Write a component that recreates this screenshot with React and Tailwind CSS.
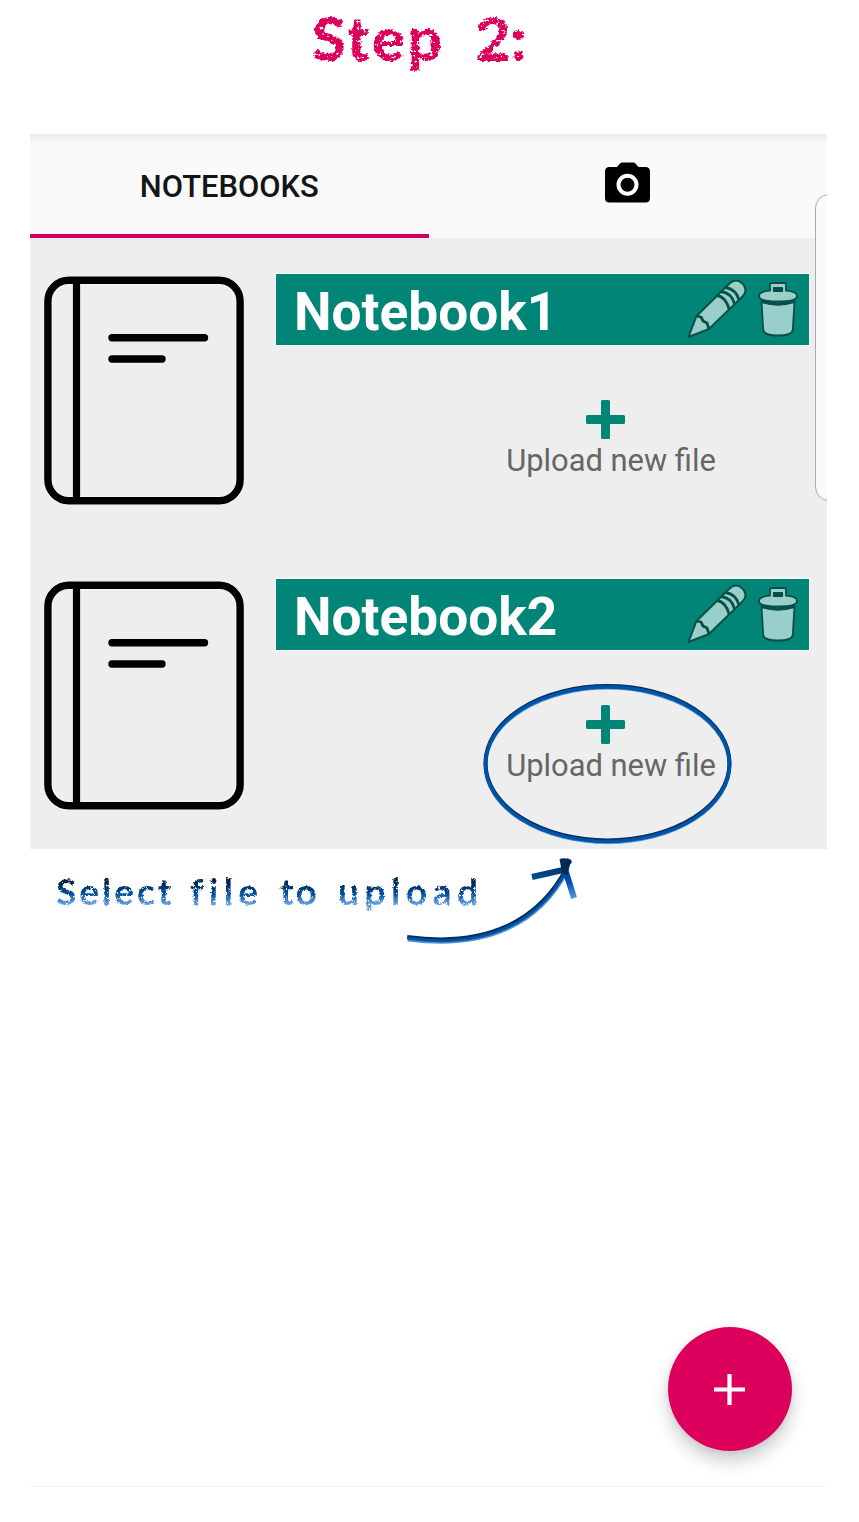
import React from "react";

function ChalkFilters() {
  return (
    <svg className="absolute h-0 w-0" aria-hidden="true">
      <filter id="chalk" x="-5%" y="-10%" width="110%" height="120%" colorInterpolationFilters="sRGB">
        <feTurbulence type="fractalNoise" baseFrequency="0.3" numOctaves="2" seed="4" result="n" />
        <feDisplacementMap in="SourceGraphic" in2="n" scale="5" xChannelSelector="R" yChannelSelector="G" result="d" />
        <feColorMatrix in="n" type="matrix" values="0 0 0 0 0  0 0 0 0 0  0 0 0 0 0  0 0 -12 0 8.700" result="m" />
        <feComposite in="d" in2="m" operator="in" />
      </filter>
      <filter id="chalkFine" x="-5%" y="-10%" width="110%" height="120%" colorInterpolationFilters="sRGB">
        <feTurbulence type="fractalNoise" baseFrequency="0.4" numOctaves="2" seed="7" result="n" />
        <feDisplacementMap in="SourceGraphic" in2="n" scale="2.800" xChannelSelector="R" yChannelSelector="G" result="d" />
        <feColorMatrix in="n" type="matrix" values="0 0 0 0 0  0 0 0 0 0  0 0 0 0 0  0 0 -10 0 7.300" result="m" />
        <feComposite in="d" in2="m" operator="in" />
      </filter>
    </svg>
  );
}

function BookIcon() {
  return (
    <svg className="ml-[14px] mt-[38px] h-[229px] w-[200px] shrink-0" viewBox="0 0 200 229" fill="none" stroke="#000">
      <rect x="3.900" y="4.200" width="192.200" height="220.500" rx="21" stroke="#fff" strokeWidth="9" opacity=".6" />
      <rect x="3.900" y="4.200" width="192.200" height="220.500" rx="21" strokeWidth="7.400" />
      <path d="M32.500 5V224" strokeWidth="7.200" />
      <path d="M68 61.700H160.500M68 83H118" strokeWidth="7.400" strokeLinecap="round" />
    </svg>
  );
}

function PencilIcon() {
  return (
    <svg className="h-[60px] w-[60px]" viewBox="0 0 60 60" fill="#98cfc8" stroke="#064f4a" strokeWidth="2" strokeLinejoin="round">
      <path d="M1.500 58L9.500 37L42 5Q49 -2 56 5Q61 11 56 17L22 50Z" />
      <path d="M9.500 37L14 38L16 42L20 44L22 50" fill="none" strokeWidth="2.800" />
      <path d="M30 16.500Q39 18 42 30M34 12.500Q45 14 47.500 25M38.500 8.500Q49 10 52 21" fill="none" strokeWidth="2.800" />
    </svg>
  );
}

function TrashIcon() {
  return (
    <svg className="h-[56px] w-[40px]" viewBox="0 0 40 56" fill="#98cfc8" stroke="#064f4a" strokeWidth="1.800" strokeLinejoin="round">
      <path d="M3.500 20L5.200 49Q6 54.500 20 54.500Q34 54.500 34.800 49L36.500 20Z" />
      <path d="M4 20.500Q20 25.500 36 20.500" fill="none" strokeWidth="3.400" />
      <path d="M1 15Q1 10.500 12 9.700V3.500Q12 2 13.500 2H26.500Q28 2 28 3.500V9.700Q39 10.500 39 15Q39 20.500 20 20.500Q1 20.500 1 15Z" />
      <path d="M15.800 6.800H24.200V10H15.800Z" fill="#064f4a" />
    </svg>
  );
}

function NotebookRow({ name }) {
  return (
    <section className="flex h-[305px]">
      <BookIcon />
      <div className="ml-8 mt-[35.500px] flex w-[533px] flex-col">
        <header className="flex h-[71.500px] shrink-0 items-start bg-[#008577] pl-[18px] shadow-[0_0_0_1px_#f7fdfd]">
          <h2 className="mt-[4.500px] w-[392.800px] whitespace-nowrap text-[53.2px] font-bold leading-[68px] text-white">{name}</h2>
          <button className="mt-[5.500px]" aria-label="Edit"><PencilIcon /></button>
          <button className="ml-[11.700px] mt-[7px]" aria-label="Delete"><TrashIcon /></button>
        </header>
        <button className="ml-[230px] mt-[55px] flex w-[210px] flex-col text-[#666]">
          <svg className="ml-[80px] h-[39px] w-[39px]" viewBox="0 0 39 39" fill="#008577">
            <path d="M16.500 0H22.500Q24 0 24 1.500V15H37.500Q39 15 39 16.500V22.500Q39 24 37.500 24H24V37.500Q24 39 22.500 39H16.500Q15 39 15 37.500V24H1.500Q0 24 0 22.500V16.500Q0 15 1.500 15H15V1.500Q15 0 16.500 0Z" />
          </svg>
          <span className="mt-[3px] whitespace-nowrap text-[30.900px] leading-[38px]">Upload new file</span>
        </button>
      </div>
    </section>
  );
}

function Annotations() {
  const curve = "M407.500 938C488 949 540 921 567 869";
  const head = "M532 877L567.500 869M574 898L564 866L570 860";
  return (
    <svg className="pointer-events-none absolute left-0 top-0 h-[1000px] w-[859px]" viewBox="0 0 859 1000" fill="none">
      <ellipse cx="607.500" cy="764.800" rx="122" ry="77.200" stroke="#4c8bd0" strokeWidth="4" />
      <ellipse cx="607.500" cy="763.200" rx="122" ry="77.200" stroke="#002e63" strokeWidth="4" />
      <ellipse cx="607.500" cy="764.200" rx="122" ry="77.200" stroke="#0054a6" strokeWidth="3.300" />
      <g strokeWidth="4">
        <path d={curve} stroke="#5492d5" transform="translate(.3 1.400)" />
        <path d={curve} stroke="#002e63" transform="translate(-.3 -1)" />
        <path d={curve} stroke="#0054a6" strokeWidth="2.800" transform="translate(0 .4)" />
      </g>
      <defs>
        <linearGradient id="tip" gradientUnits="userSpaceOnUse" x1="0" y1="859" x2="0" y2="899">
          <stop offset="0" stopColor="#002850" />
          <stop offset=".3" stopColor="#003c78" />
          <stop offset=".6" stopColor="#0056aa" />
          <stop offset="1" stopColor="#5b98d9" />
        </linearGradient>
      </defs>
      <path d={head} stroke="url(#tip)" strokeWidth="6" />
      <path d="M559.500 859Q565 857 571.500 860L567 875L562 872Z" fill="#002b55" />
    </svg>
  );
}

const word = "bg-linear-to-b from-[#002850] from-35% via-[#0056aa] via-60% to-[#65a0de] to-80% bg-clip-text text-transparent";

export default function App() {
  return (
    <main className="relative flex h-[1522px] w-[859px] flex-col overflow-hidden bg-white font-['Roboto',sans-serif]">
      <ChalkFilters />
      <h1 className="flex h-[134px] shrink-0 pl-[312px] font-['Lato',sans-serif] text-[61px] font-black leading-[75px] text-[#dc005c] [filter:url(#chalk)]">
        <span className="w-[163px] tracking-[2.5px]">Step</span>
        <span className="tracking-[0px]">2:</span>
      </h1>
      <div className="relative ml-[30px] h-[715px] w-[797px] shrink-0 overflow-hidden bg-[#eee]">
        <nav className="flex h-[104px] bg-[#fafafa] bg-linear-to-b from-[#ebebeb] to-[#fafafa] to-10%">
          <div className="flex w-[398.500px] items-center justify-center border-b-[4px] border-[#d50057] pt-[6px] text-[30.9px] font-medium text-[#151515]">NOTEBOOKS</div>
          <div className="flex flex-1 justify-center pt-[28px]">
            <svg className="h-[41px] w-[45px]" viewBox="0 0 45 41">
              <path d="M4.500 5H12L15 1.500Q16 .5 17.500 .5H28Q29.500 .5 30.500 1.500L33.500 5H40.500Q45 5 45 9.500V36Q45 40.500 40.500 40.500H4.500Q0 40.500 0 36V9.500Q0 5 4.500 5Z" />
              <circle cx="22.500" cy="22.700" r="9" fill="none" stroke="#fff" strokeWidth="4" />
            </svg>
          </div>
        </nav>
        <NotebookRow name="Notebook1" />
        <NotebookRow name="Notebook2" />
        <div className="absolute left-[785px] top-[59.500px] h-[307px] w-[30px] rounded-[14px] border-[1.500px] border-[#aaa] bg-[#fafafa]" />
      </div>
      <p className="ml-[56px] mt-[16px] flex h-[60px] shrink-0 font-['Lato',sans-serif] text-[37px] font-bold leading-[52px] [filter:url(#chalkFine)]">
        <span className="w-[134px] tracking-[3px]"><span className={word}>Select</span></span>
        <span className="w-[90px] tracking-[5.500px]"><span className={word}>file</span></span>
        <span className="w-[58px] tracking-[2px]"><span className={word}>to</span></span>
        <span className="tracking-[5.600px]"><span className={word}>upload</span></span>
      </p>
      <div className="mt-auto ml-[30px] mr-8 flex h-[160px] shrink-0 justify-end border-b border-[#f3f3f3] pr-[35.500px]">
        <button aria-label="Add notebook" className="flex h-[124px] w-[124px] items-center justify-center rounded-full bg-[#dc005c] shadow-[0_10px_18px_rgba(0,0,0,0.2),0_1px_6px_rgba(0,0,0,0.07)]">
          <svg className="h-[31px] w-[31px]" viewBox="0 0 31 31" stroke="#fff" strokeWidth="4.200">
            <path d="M15.500 0V31M0 15.500H31" />
          </svg>
        </button>
      </div>
      <div className="h-[35px] shrink-0" />
      <Annotations />
    </main>
  );
}
